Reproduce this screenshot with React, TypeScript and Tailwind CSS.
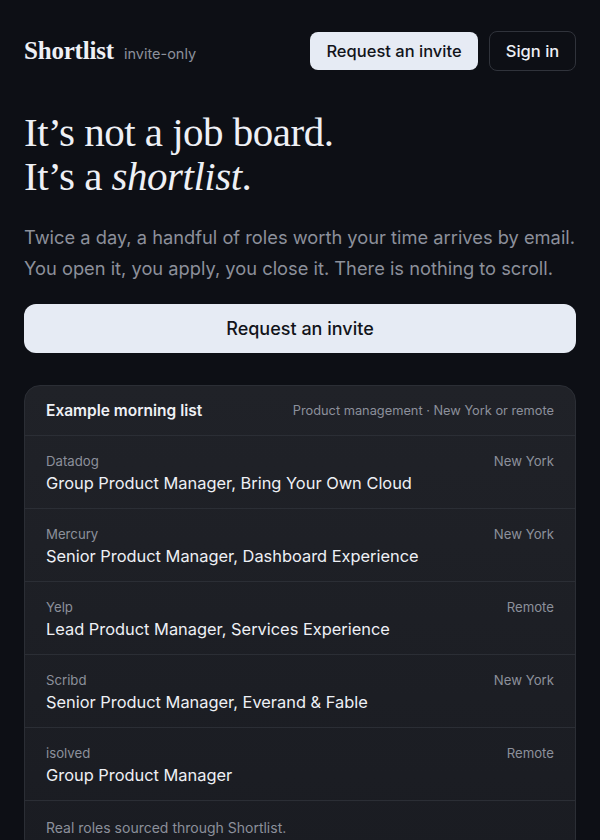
import React from "react";

interface Role {
  company: string;
  title: string;
  location: string;
}

const roles: Role[] = [
  { company: "Datadog", title: "Group Product Manager, Bring Your Own Cloud", location: "New York" },
  { company: "Mercury", title: "Senior Product Manager, Dashboard Experience", location: "New York" },
  { company: "Yelp", title: "Lead Product Manager, Services Experience", location: "Remote" },
  { company: "Scribd", title: "Senior Product Manager, Everand & Fable", location: "New York" },
  { company: "isolved", title: "Group Product Manager", location: "Remote" },
];

const serif = { fontFamily: '"Liberation Serif", "DejaVu Serif", serif' };

const App: React.FC = () => {
  return (
    <div
      className="min-h-[840px] bg-[#0d0f15] px-6 text-[#eef0f5]"
      style={{ fontFamily: 'Inter, "Noto Sans", sans-serif' }}
    >
      {/* header */}
      <header className="flex h-[102px] items-center justify-between">
        <div className="flex items-baseline gap-2.5">
          <span className="text-[25px] font-bold tracking-[-0.2px]" style={serif}>
            Shortlist
          </span>
          <span className="text-[14.5px] text-[#8c909b]">invite-only</span>
        </div>
        <div className="flex items-center gap-[11px]">
          <button className="h-[38px] w-[168px] rounded-lg bg-[#e6ebf4] text-[16.5px] font-medium text-[#12141a]">
            Request an invite
          </button>
          <button className="h-[40px] w-[87px] rounded-lg border border-[#30333b] text-[16.5px] font-medium text-[#eef0f5]">
            Sign in
          </button>
        </div>
      </header>

      {/* hero */}
      <h1 className="mt-[8px] text-[41px] leading-[44px] tracking-[-0.5px]" style={serif}>
        It’s not a job board.
        <br />
        It’s a <em>shortlist</em>.
      </h1>
      <p className="mt-[24px] text-[18.3px] leading-[31px] text-[#8c909b]">
        Twice a day, a handful of roles worth your time arrives by email. You open it, you apply,
        you close it. There is nothing to scroll.
      </p>
      <button className="mt-[20px] h-[49px] w-full rounded-xl bg-[#e6ebf4] text-[18px] font-medium text-[#12141a]">
        Request an invite
      </button>

      {/* example list */}
      <div className="mt-8 overflow-hidden rounded-2xl border border-[#2b2e35] bg-gradient-to-b from-[#202228] to-[#1a1c22]">
        <div className="flex h-[49px] items-center justify-between px-[21px]">
          <span className="text-[15.5px] font-semibold">Example morning list</span>
          <span className="text-[12.8px] text-[#8c909b]">Product management · New York or remote</span>
        </div>
        {roles.map((role) => (
          <div key={role.company} className="border-t border-[#2b2e35] px-[21px] pb-[13px] pt-[15px]">
            <div className="flex justify-between text-[13.2px] leading-5 text-[#8c909b]">
              <span>{role.company}</span>
              <span>{role.location}</span>
            </div>
            <div className="text-[16.4px] leading-6 text-[#eef0f5]">{role.title}</div>
          </div>
        ))}
        <div className="border-t border-[#2b2e35] px-[21px] py-[16px] text-[14px] text-[#8c909b]">
          Real roles sourced through Shortlist.
        </div>
      </div>
    </div>
  );
};

export default App;
